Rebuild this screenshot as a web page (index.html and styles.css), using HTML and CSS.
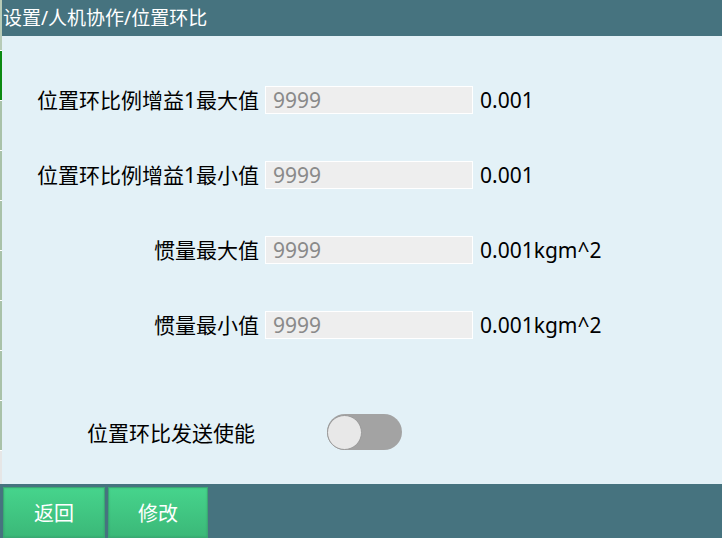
FILE: index.html
```html
<!DOCTYPE html>
<html lang="zh-CN">
<head>
  <meta charset="UTF-8" />
  <meta name="viewport" content="width=device-width, initial-scale=1" />
  <title>位置环比</title>
  <link rel="stylesheet" href="styles.css">
</head>
<body>

<div class="page">
  <div class="side-strip">
    <span class="seg seg-top"></span>
    <span class="seg seg-active"></span>
    <span class="seg"></span>
    <span class="seg"></span>
    <span class="seg"></span>
    <span class="seg"></span>
    <span class="seg"></span>
    <span class="seg"></span>
    <span class="seg"></span>
    <span class="seg seg-end"></span>
  </div>

  <div class="main">
    <header class="topbar">设置/人机协作/位置环比</header>

    <div class="form">
      <div class="field-grid">
        <label class="field-label">位置环比例增益1最大值</label>
        <input class="field-input" type="text" placeholder="9999" />
        <span class="field-unit">0.001</span>

        <label class="field-label">位置环比例增益1最小值</label>
        <input class="field-input" type="text" placeholder="9999" />
        <span class="field-unit">0.001</span>

        <label class="field-label">惯量最大值</label>
        <input class="field-input" type="text" placeholder="9999" />
        <span class="field-unit">0.001kgm^2</span>

        <label class="field-label">惯量最小值</label>
        <input class="field-input" type="text" placeholder="9999" />
        <span class="field-unit">0.001kgm^2</span>
      </div>

      <div class="switch-row">
        <span class="switch-label">位置环比发送使能</span>
        <span class="switch"><span class="knob"></span></span>
      </div>
    </div>
  </div>
</div>

<footer class="bottombar">
  <button class="btn">返回</button>
  <button class="btn">修改</button>
</footer>

</body>
</html>
```

FILE: styles.css
```css
html, body {
  margin: 0;
  padding: 0;
  height: 100%;
}
body {
  font-family: "Noto Sans", "Noto Sans CJK SC", sans-serif;
  background: #e3f1f7;
  display: flex;
  flex-direction: column;
  overflow: hidden;
}
.page {
  flex: 1;
  display: flex;
}
.side-strip {
  width: 2px;
  display: flex;
  flex-direction: column;
  background: #ffffff;
}
.seg {
  height: 49px;
  margin-bottom: 1px;
  background: #a9c2a9;
}
.seg-top {
  height: 50px;
  background: #b7cbb7;
}
.seg-active {
  background: #0b8a12;
}
.seg-end {
  flex: 1;
  margin: 0;
  background: #e6e6e6;
}
.main {
  flex: 1;
  display: flex;
  flex-direction: column;
}
.topbar {
  height: 36px;
  background: #46737f;
  color: #fff;
  font-size: 19px;
  line-height: 36px;
  padding-left: 1px;
  white-space: nowrap;
}
.form {
  padding-top: 50px;
}
.field-grid {
  display: grid;
  grid-template-columns: 257px 208px auto;
  column-gap: 6px;
  row-gap: 47px;
  align-items: center;
}
.field-label {
  justify-self: end;
  font-size: 21px;
  line-height: 28px;
  color: #000;
  white-space: nowrap;
}
.field-input {
  box-sizing: border-box;
  width: 208px;
  height: 28px;
  border: 1px solid #fff;
  background: #eeeeee;
  padding: 0 0 0 7px;
  font-family: inherit;
  font-size: 21px;
  outline: none;
}
.field-input::placeholder {
  color: #8a8a8a;
}
.field-unit {
  font-size: 21px;
  line-height: 28px;
  margin-left: 1px;
  color: #000;
}
.switch-row {
  display: flex;
  align-items: center;
  margin-top: 75px;
  padding-left: 85px;
  gap: 72px;
}
.switch-label {
  font-size: 21px;
  width: 168px;
  white-space: nowrap;
}
.switch {
  width: 75px;
  height: 36px;
  border-radius: 18px;
  background: #a3a3a3;
  display: flex;
  align-items: center;
}
.knob {
  box-sizing: border-box;
  width: 35px;
  height: 35px;
  border-radius: 50%;
  background: #e8e8e8;
  border: 1px solid #9a9a9a;
}
.bottombar {
  height: 54px;
  background: #46737f;
  display: flex;
  align-items: flex-end;
  gap: 3px;
  padding-left: 3px;
}
.btn {
  width: 102px;
  height: 51px;
  border: 1px solid #3aa873;
  background: linear-gradient(#46d48c, #3bb878);
  color: #fff;
  font-family: inherit;
  font-size: 20px;
  padding: 0;
  box-shadow: inset 0 0 2px rgba(0,0,0,0.15);
}
.btn + .btn {
  width: 100px;
}
```
